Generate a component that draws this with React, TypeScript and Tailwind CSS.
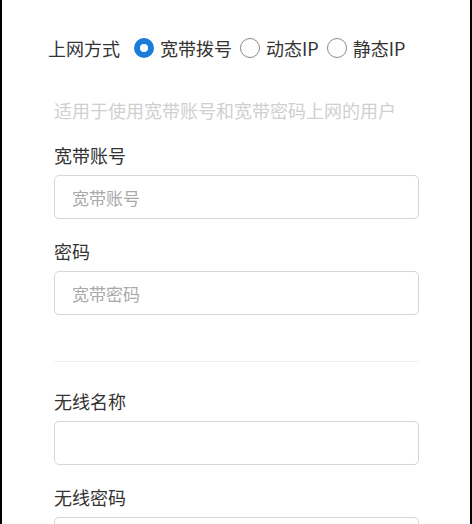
import React from "react";

function Radio({ label, checked }: { label: string; checked?: boolean }) {
  return (
    <label className="flex items-center gap-[6px]">
      {checked ? (
        <span className="flex h-[20px] w-[20px] items-center justify-center rounded-full bg-[#1a7ed8]">
          <span className="h-[8px] w-[8px] rounded-full bg-white" />
        </span>
      ) : (
        <span className="h-[20px] w-[20px] rounded-full border-[1.5px] border-[#8a8a8a] bg-white" />
      )}
      <span>{label}</span>
    </label>
  );
}

function Field({ label, placeholder, first }: { label: string; placeholder?: string; first?: boolean }) {
  return (
    <div className={first ? "" : "mt-[20px]"}>
      <div className="text-[18px] leading-[24px] text-[#333]">{label}</div>
      <input
        type="text"
        placeholder={placeholder}
        className="mt-[8px] block h-[44px] w-full rounded-[5px] border border-[#d6d6d6] bg-white px-[17px] text-[17px] text-[#333] placeholder:text-[#a9a9a9] focus:outline-none"
      />
    </div>
  );
}

export default function App() {
  return (
    <div
      className="h-[524px] overflow-hidden border-l-2 border-r-2 border-black bg-white"
      style={{ fontFamily: '"Noto Sans CJK SC", "Noto Sans", sans-serif' }}
    >
      <div className="pl-[52px] pr-[51px] pt-[36px]">
        <div className="-ml-[6px] flex items-center text-[18px] leading-[24px] text-[#333]">
          <span className="mr-[14px]">上网方式</span>
          <div className="flex items-center gap-[8px]">
            <Radio label="宽带拨号" checked />
            <Radio label="动态IP" />
            <Radio label="静态IP" />
          </div>
        </div>
        <p className="mt-[38px] text-[18px] leading-[24px] text-[#d0d0d0]">
          适用于使用宽带账号和宽带密码上网的用户
        </p>
        <div className="mt-[21px]">
          <Field label="宽带账号" placeholder="宽带账号" first />
          <Field label="密码" placeholder="宽带密码" />
        </div>
        <div className="mt-[46px] h-px bg-[#f0f0f0]" />
        <div className="mt-[27px]">
          <Field label="无线名称" first />
          <Field label="无线密码" />
        </div>
      </div>
    </div>
  );
}
